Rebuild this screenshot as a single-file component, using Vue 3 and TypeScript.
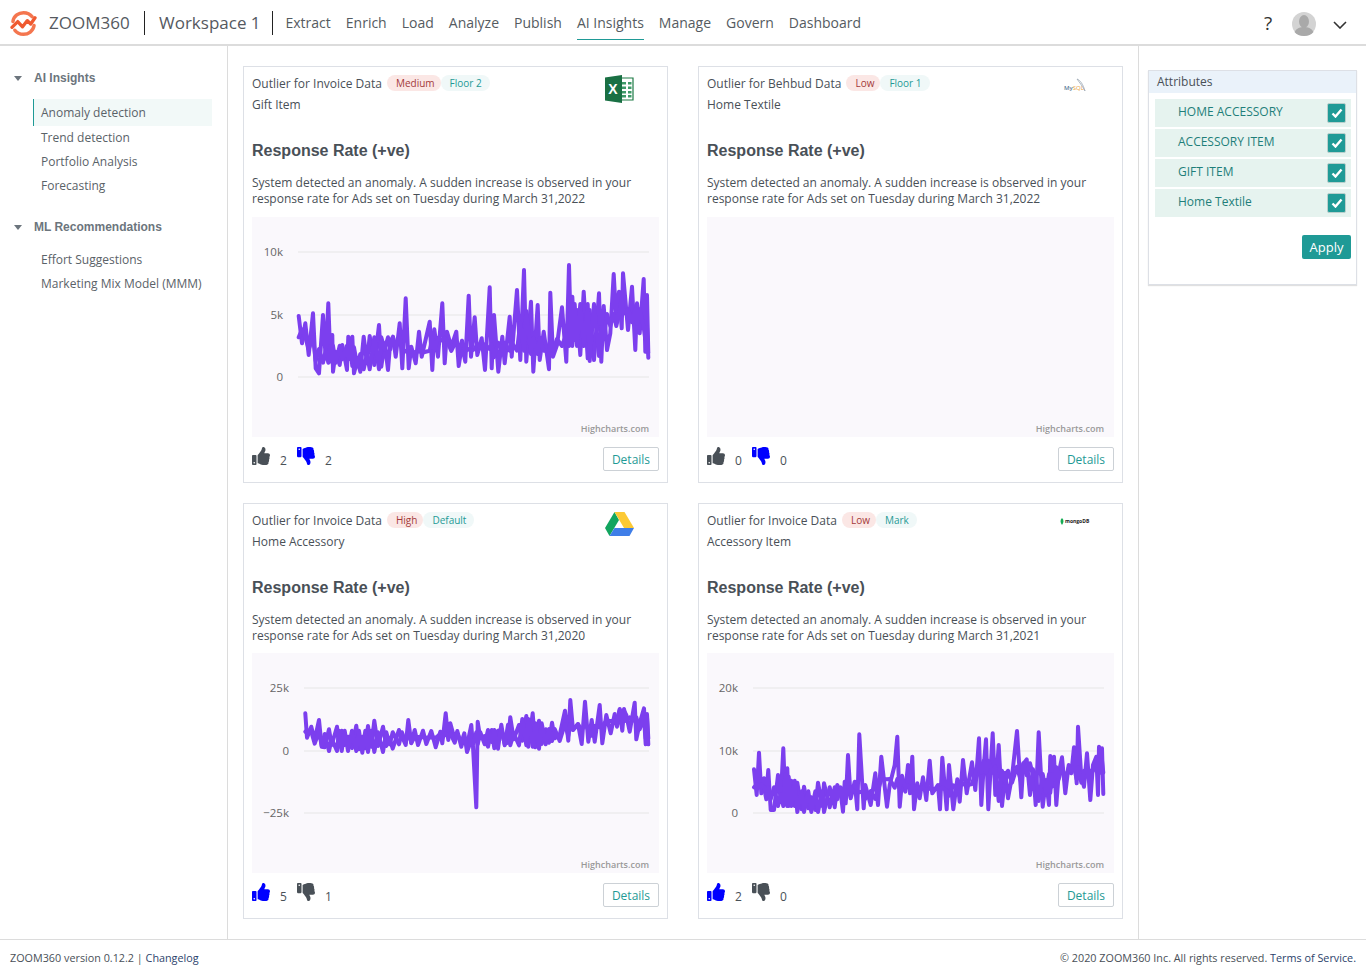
<template>
  <div class="app">
    <header class="topbar">
      <svg class="logo" viewBox="0 0 28 26" aria-hidden="true">
        <path d="M3 11C4 5 9 1.800 14 1.800c4 0 7 1.500 9 4.200" class="logo-arc" />
        <path d="M25 15c-1 6-6 9.200-11 9.200-4 0-7-1.500-9-4.200" class="logo-arc" />
        <path d="M2 17 8 11l5 5.500 5-6.500 3.500 3.500 4.500-6.500" class="logo-wave" />
      </svg>
      <span class="brand">ZOOM360</span>
      <span class="workspace">Workspace 1</span>
      <nav class="nav">
        <a v-for="item in navItems" :key="item" :class="{ active: item === 'AI Insights' }">{{ item }}</a>
      </nav>
      <div class="top-actions">
        <span class="help">?</span>
        <svg class="avatar" viewBox="0 0 24 24" aria-hidden="true">
          <circle cx="12" cy="12" r="12" fill="#d3d3d3" />
          <ellipse cx="12" cy="9.500" rx="5" ry="6.500" fill="#a9a9a9" />
          <path d="M2.500 20c2-4 6-5 9.500-5s7.500 1 9.500 5c-2 2.600-5.500 4-9.500 4s-7.500-1.400-9.500-4z" fill="#a9a9a9" />
        </svg>
        <svg class="chevron" viewBox="0 0 14 8" aria-hidden="true">
          <path d="M1 1l6 6 6-6" fill="none" stroke="#333" stroke-width="1.600" />
        </svg>
      </div>
    </header>

    <div class="body">
      <aside class="sidebar">
        <section v-for="group in menu" :key="group.title" class="menu-group">
          <h4 class="menu-title"><i class="caret"></i>{{ group.title }}</h4>
          <ul>
            <li v-for="link in group.links" :key="link" :class="{ current: link === 'Anomaly detection' }">{{ link }}</li>
          </ul>
        </section>
      </aside>

      <main class="content">
        <article v-for="card in cards" :key="card.heading + card.sub" class="card">
          <div class="card-head">
            <span class="card-title">{{ card.heading }}</span>
            <span class="pill pill-level">{{ card.level }}</span>
            <span class="pill pill-floor">{{ card.floor }}</span>
            <div class="source">
              <svg v-if="card.source === 'excel'" class="src-excel" viewBox="0 0 29 28" aria-hidden="true">
                <path d="M15 3h13v22H15z" fill="#fff" stroke="#1d7a45" stroke-width="1.200" />
                <path d="M17 7h4v2.500h-4zM23 7h3.500v2.500H23zM17 11.500h4V14h-4zM23 11.500h3.500V14H23zM17 16h4v2.500h-4zM23 16h3.500v2.500H23zM17 20h4v2.500h-4zM23 20h3.500v2.500H23z" fill="#3f9a68" />
                <path d="M0 2.500 17 0v28L0 25.500z" fill="#1a7044" />
                <text x="8" y="19" class="excel-x">X</text>
              </svg>
              <svg v-else-if="card.source === 'drive'" class="src-drive" viewBox="0 0 29 24" aria-hidden="true">
                <path d="M9.500 0 0 16l4.500 8L14 8z" fill="#12a55f" />
                <path d="M9.500 0h10L29 16H19z" fill="#fcc934" />
                <path d="M9.500 16H29l-4.500 8h-20z" fill="#3f7ee8" />
              </svg>
              <div v-else-if="card.source === 'mysql'" class="src-mysql">
                <svg viewBox="0 0 10 14" aria-hidden="true">
                  <path d="M1 1c3 1 6 5 8 12C7 9 4 5 1 1z" fill="none" stroke="#9aa7b4" stroke-width=".8" />
                </svg>
                <span><b>My</b><em>SQL</em></span>
              </div>
              <div v-else class="src-mongo">
                <svg viewBox="0 0 4 7" aria-hidden="true"><path d="M2 0c2 2 2 4 0 7-2-3-2-5 0-7z" fill="#13aa52" /></svg>
                <span>mongoDB</span>
              </div>
            </div>
          </div>
          <div class="card-sub">{{ card.sub }}</div>
          <h3 class="card-heading">Response Rate (+ve)</h3>
          <p class="card-desc">
            System detected an anomaly. A sudden increase is observed in your<br />
            response rate for Ads set on Tuesday during March 31,{{ card.year }}
          </p>

          <svg class="chart" viewBox="0 0 407 220" role="img">
            <template v-if="card.axis">
              <g v-for="(label, i) in card.axis.labels" :key="label">
                <line :x1="card.axis.left" x2="397" :y1="gridY[i]" :y2="gridY[i]" class="grid" />
                <text :x="card.axis.left - 15" :y="gridY[i] + 4" class="tick">{{ label }}</text>
              </g>
              <polyline :points="toPoints(card.extrema, card.offsetY)" class="series" />
              <polyline :points="bandPoints(card.extrema, card.offsetY)" class="series" />
            </template>
            <text x="397" y="214.500" class="credit">Highcharts.com</text>
          </svg>

          <div class="card-foot">
            <svg class="thumb" :class="{ on: card.upOn }" viewBox="0 0 512 512" aria-hidden="true"><path :d="thumbPath" /></svg>
            <span class="count">{{ card.up }}</span>
            <svg class="thumb thumb-down" :class="{ on: card.downOn }" viewBox="0 0 512 512" aria-hidden="true">
              <path :d="thumbPath" transform="matrix(1 0 0 -1 0 512)" />
            </svg>
            <span class="count">{{ card.down }}</span>
            <button type="button" class="details">Details</button>
          </div>
        </article>
      </main>

      <aside class="rightcol">
        <div class="attr-panel">
          <div class="attr-head">Attributes</div>
          <div class="attr-list">
            <label v-for="attr in attributes" :key="attr" class="attr-row">
              <span>{{ attr }}</span>
              <i class="check">
                <svg viewBox="0 0 12 10" aria-hidden="true"><path d="M1.500 5.500 4.500 8.500 10.500 1.500" fill="none" stroke="#fff" stroke-width="2.400" /></svg>
              </i>
            </label>
          </div>
          <div class="attr-actions">
            <button type="button" class="apply">Apply</button>
          </div>
        </div>
      </aside>
    </div>

    <footer class="footer">
      <span>ZOOM360 version 0.12.2 | <a>Changelog</a></span>
      <span>© 2020 ZOOM360 Inc. All rights reserved. <a>Terms of Service.</a></span>
    </footer>
  </div>
</template>

<script setup lang="ts">
interface Card {
  heading: string
  level: string
  floor: string
  sub: string
  source: 'excel' | 'mysql' | 'drive' | 'mongo'
  year: number
  up: number
  down: number
  upOn: boolean
  downOn: boolean
  offsetY: number
  axis: { labels: string[]; left: number } | null
  extrema: number[]
}

const navItems = ['Extract', 'Enrich', 'Load', 'Analyze', 'Publish', 'AI Insights', 'Manage', 'Govern', 'Dashboard']

const menu = [
  { title: 'AI Insights', links: ['Anomaly detection', 'Trend detection', 'Portfolio Analysis', 'Forecasting'] },
  { title: 'ML Recommendations', links: ['Effort Suggestions', 'Marketing Mix Model (MMM)'] }
]

const attributes = ['HOME ACCESSORY', 'ACCESSORY ITEM', 'GIFT ITEM', 'Home Textile']

const gridY = [35, 98, 160]

const thumbPath =
  'M104 224H24c-13.255 0-24 10.745-24 24v240c0 13.255 10.745 24 24 24h80c13.255 0 24-10.745 24-24V248c0-13.255-10.745-24-24-24zM64 472c-13.255 0-24-10.745-24-24s10.745-24 24-24 24 10.745 24 24-10.745 24-24 24zM384 81.452c0 42.416-25.97 66.208-33.277 94.548h101.723c33.397 0 59.397 27.746 59.553 58.098.084 17.938-7.546 37.249-19.439 49.197l-.11.11c9.836 23.337 8.237 56.037-9.308 79.469 8.681 25.895-.069 57.704-16.382 74.757 4.298 17.598 2.244 32.575-6.148 44.632C440.202 511.587 389.616 512 346.839 512l-2.845-.001c-48.287-.017-87.806-17.598-119.56-31.725-15.957-7.099-36.821-15.887-52.651-16.178-6.54-.12-11.783-5.457-11.783-11.998v-213.77c0-3.2 1.282-6.271 3.558-8.521 39.614-39.144 56.648-80.587 89.117-113.111 14.804-14.832 20.188-37.236 25.393-58.902C282.515 39.293 291.817 0 312 0c24 0 72 8 72 81.452z'

// local highs and lows of each line, read off at 3x (x, y, x, y ...)
const series1 = [167,258,177,340,187,280,197,375,210,250,218,415,228,430,240,255,248,385,256,220,262,380,268,315,270,425,278,365,290,405,298,345,312,420,316,320,322,370,328,320,333,430,343,390,352,425,362,320,372,400,380,318,394,405,408,285,415,410,425,340,435,420,442,335,450,320,458,380,470,280,478,415,488,205,497,415,505,350,518,400,528,305,536,380,560,275,568,420,574,298,585,380,598,220,605,400,612,305,625,350,640,305,647,408,657,345,667,395,677,197,684,380,695,262,703,375,716,325,726,420,740,172,746,415,753,255,766,425,778,320,785,400,800,260,806,380,822,180,832,390,843,120,850,395,864,215,871,425,884,225,890,390,902,305,918,418,922,188,930,380,942,345,957,232,970,395,978,105,984,330,988,200,995,330,1002,240,1012,375,1022,185,1034,385,1040,240,1053,390,1068,190,1075,395,1082,228,1092,360,1102,310,1112,132,1120,270,1128,185,1136,295,1140,130,1155,300,1167,170,1177,360,1182,220,1190,310,1202,147,1207,365,1212,195,1216,368]

const series3 = [187,130,192,203,205,170,215,210,228,150,236,230,245,232,258,178,266,225,282,170,288,226,296,182,305,225,315,200,327,234,340,167,348,238,358,200,367,235,375,168,385,230,394,152,405,228,420,170,430,228,440,205,449,236,468,180,477,200,488,225,496,150,505,220,515,180,525,225,540,182,550,222,565,183,578,232,592,185,598,220,608,130,616,210,622,160,635,208,643,183,655,230,664,200,672,228,685,165,690,230,700,412,704,155,712,205,725,198,735,230,746,180,754,235,765,182,775,180,785,222,795,218,802,142,812,208,828,165,838,212,850,138,856,230,869,130,877,232,888,152,896,222,908,178,918,218,927,158,935,205,950,195,966,122,976,212,982,90,990,180,1005,162,1016,222,1026,95,1036,215,1046,150,1055,215,1070,105,1078,220,1090,135,1103,190,1115,132,1122,170,1130,120,1138,182,1143,122,1150,135,1160,185,1175,98,1180,208,1190,160,1203,115,1208,205,1212,132,1216,205]

const series4 = [168,298,176,375,183,248,190,370,198,325,205,370,211,300,218,420,228,420,240,315,248,390,256,235,262,390,268,295,272,408,280,332,290,408,298,338,311,418,318,350,331,415,340,382,352,420,360,338,373,408,378,340,395,412,404,370,410,412,418,345,428,370,435,425,440,335,443,400,450,255,458,385,470,335,478,418,484,193,497,415,502,345,518,405,532,310,540,405,550,260,567,410,575,345,590,285,598,200,605,410,612,335,622,365,630,285,636,370,643,260,648,418,658,340,665,385,675,322,685,390,695,272,703,370,720,345,726,418,733,263,746,418,753,285,766,418,778,328,785,395,795,270,806,370,822,277,832,360,843,205,850,405,857,290,864,208,871,418,884,190,892,375,902,225,912,408,922,308,930,385,942,320,957,183,970,382,976,282,986,268,996,375,1005,298,1013,405,1022,187,1034,410,1044,330,1053,405,1057,258,1062,350,1068,260,1075,405,1082,310,1092,262,1102,370,1112,285,1120,310,1128,232,1136,340,1140,170,1150,320,1158,350,1167,250,1177,390,1185,285,1195,260,1200,375,1203,230,1208,290,1212,235,1216,372]

const cards: Card[] = [
  { heading: 'Outlier for Invoice Data', level: 'Medium', floor: 'Floor 2', sub: 'Gift Item', source: 'excel', year: 2022, up: 2, down: 2, upOn: false, downOn: true, offsetY: 13, axis: { labels: ['10k', '5k', '0'], left: 46 }, extrema: series1 },
  { heading: 'Outlier for Behbud Data', level: 'Low', floor: 'Floor 1', sub: 'Home Textile', source: 'mysql', year: 2022, up: 0, down: 0, upOn: false, downOn: true, offsetY: 13, axis: null, extrema: [] },
  { heading: 'Outlier for Invoice Data', level: 'High', floor: 'Default', sub: 'Home Accessory', source: 'drive', year: 2020, up: 5, down: 1, upOn: true, downOn: false, offsetY: 17, axis: { labels: ['25k', '0', '−25k'], left: 52 }, extrema: series3 },
  { heading: 'Outlier for Invoice Data', level: 'Low', floor: 'Mark', sub: 'Accessory Item', source: 'mongo', year: 2021, up: 2, down: 0, upOn: true, downOn: false, offsetY: 17, axis: { labels: ['20k', '10k', '0'], left: 46 }, extrema: series4 }
]

function toPoints(values: number[], offsetY: number): string {
  const out: string[] = []
  for (let i = 0; i < values.length; i += 2) {
    out.push(`${(values[i] / 3 - 9).toFixed(1)},${(values[i + 1] / 3 + offsetY).toFixed(1)}`)
  }
  return out.join(' ')
}

// the real line is much denser than the highs and lows: wiggle round its running middle to fill the body
function bandPoints(values: number[], offsetY: number): string {
  const out: string[] = []
  const count = values.length / 2
  for (let i = 0; i < count; i++) {
    const around: number[] = []
    for (let j = Math.max(0, i - 3); j <= Math.min(count - 1, i + 3); j++) around.push(values[j * 2 + 1])
    around.sort((a, b) => a - b)
    const middle = around[Math.floor(around.length / 2)]
    const wiggle = i % 2 ? 6 : -6
    out.push(`${(values[i * 2] / 3 - 9).toFixed(1)},${(middle / 3 + offsetY + wiggle).toFixed(1)}`)
  }
  return out.join(' ')
}
</script>

<style>
html, body { margin: 0; background: #fff; }
</style>

<style scoped>
.app { display: flex; flex-direction: column; height: 975px; font-family: "Open Sans", sans-serif; color: #495057; overflow: hidden; }

.topbar { flex: none; height: 46px; box-sizing: border-box; display: flex; align-items: center; border-bottom: 2px solid #dcdcdc; padding: 2px 0 0 10px; }
.logo { width: 27px; height: 25px; flex: none; }
.logo-arc { fill: none; stroke: #f4764f; stroke-width: 3.600; stroke-linecap: round; }
.logo-wave { fill: none; stroke: #ef5a30; stroke-width: 3.400; stroke-linejoin: round; stroke-linecap: round; }
.brand { font-size: 17px; margin-left: 12px; color: #55595f; width: 95px; border-right: 1px solid #222; line-height: 24px; }
.workspace { font-size: 17px; color: #55595f; padding-left: 14px; width: 113px; border-right: 1px solid #222; line-height: 24px; }
.nav { display: flex; gap: 15px; padding-left: 12.500px; align-self: flex-start; margin-top: -2px; }
.nav a { font-size: 14px; line-height: 46px; color: #555b61; height: 40px; box-sizing: border-box; }
.nav a.active { border-bottom: 1px solid #1f9a96; }
.top-actions { margin-left: auto; display: flex; align-items: center; padding-right: 19px; }
.help { font-size: 19px; color: #333; width: 28px; }
.avatar { width: 24px; height: 24px; margin: 2px 17px 0 0; }
.chevron { width: 14px; height: 8px; margin-top: 3px; }

.body { flex: 1; min-height: 0; display: flex; }
.sidebar { flex: none; width: 228px; box-sizing: border-box; border-right: 1px solid #dcdcdc; padding: 23px 15px 0 14px; }
.menu-group { margin-bottom: 20px; }
.menu-title { display: flex; align-items: center; margin: 0 0 12px; font: bold 12px/18px "Liberation Sans", Arial, sans-serif; color: #6c757d; }
.caret { width: 0; height: 0; border-left: 4.500px solid transparent; border-right: 4.500px solid transparent; border-top: 5px solid #6c757d; margin-right: 12px; }
.menu-group ul { list-style: none; margin: 0; padding: 0 0 0 19px; }
.menu-group li { font-size: 12px; line-height: 24px; padding-left: 8px; color: #5a6268; }
.menu-group li.current { background: #f2f9f8; border-left: 1px solid #1f9a96; padding: 1px 0 0 7px; line-height: 26px; }

.content { flex: none; width: 911px; box-sizing: border-box; border-right: 1px solid #dcdcdc; padding: 20px 15px 0; display: grid; grid-template-columns: 425px 425px; grid-template-rows: 417px 416px; column-gap: 30px; row-gap: 20px; align-content: start; }
.card { box-sizing: border-box; border: 1px solid #dde0e6; padding: 8px; background: #fff; }
.card-head { display: flex; align-items: center; height: 16px; position: relative; }
.card-title { font-size: 12px; color: #495057; margin-right: 5px; white-space: nowrap; }
.pill { font-size: 10px; line-height: 16px; height: 16px; white-space: nowrap; }
.pill-level { background: #fbe7e5; color: #a33a3a; padding: 0 6px 0 9px; border-radius: 8px; }
.pill-floor { background: #f0f8f8; color: #1f9a96; padding: 0 8px 0 9px; border-radius: 8px; }
.source { position: absolute; left: 353px; top: 0; }
.src-excel { display: block; width: 29px; height: 28px; }
.excel-x { font: bold 14px "Liberation Sans", Arial, sans-serif; fill: #fff; text-anchor: middle; }
.src-drive { display: block; width: 29px; height: 24px; }
.src-mysql { position: relative; left: 4px; top: 3px; width: 22px; height: 15px; }
.src-mysql svg { position: absolute; left: 12px; top: 0; width: 10px; height: 14px; }
.src-mysql span { position: absolute; left: 0; top: 6px; font: 6px/8px "Open Sans", sans-serif; color: #5b7c9a; white-space: nowrap; }
.src-mysql b { font-weight: 600; }
.src-mysql em { font-style: normal; color: #e8a33d; }
.src-mongo { display: flex; align-items: center; gap: 1px; margin: 6px 0 0; }
.src-mongo svg { width: 4px; height: 7px; }
.src-mongo span { font: 700 5px/7px "Open Sans", sans-serif; color: #222; }
.card-sub { font-size: 12px; line-height: 16px; margin-top: 6px; color: #495057; }
.card-heading { margin: 28px 0 0; font: bold 16px/20px "Liberation Sans", Arial, sans-serif; color: #495057; }
.card-desc { margin: 14px 0 0; font-size: 12px; line-height: 16px; color: #495057; white-space: nowrap; }
.chart { display: block; width: 407px; height: 220px; margin-top: 10px; background: #faf8fc; }
.card:nth-child(n + 3) .chart { margin-top: 9px; }
.grid { stroke: #e6e6e6; stroke-width: 1; }
.tick { font-size: 11.500px; fill: #666; text-anchor: end; }
.series { fill: none; stroke: #7c3fee; stroke-width: 4; stroke-linejoin: round; stroke-linecap: round; }
.credit { font-size: 9px; font-weight: 600; fill: #999; text-anchor: end; }
.card-foot { display: flex; align-items: flex-start; margin-top: 10px; }
.thumb { width: 18px; height: 18px; fill: #495057; flex: none; }
.thumb.on { fill: #0000ff; }
.count { font-size: 12px; line-height: 16px; margin: 6px 10px 0 10px; color: #495057; }
.details { margin-left: auto; width: 56px; height: 24px; padding: 0; box-sizing: border-box; background: #fff; border: 1px solid #ccd1d6; border-radius: 2px; color: #1f9a96; font: 12px "Open Sans", sans-serif; }

.rightcol { flex: 1; padding: 24px 9px 0; }
.attr-panel { box-sizing: border-box; height: 215px; border: 1px solid #dde0e6; box-shadow: 0 1px 1px rgba(0,0,0,.12); padding-bottom: 8px; }
.attr-head { background: #eaf2fa; font-size: 12px; line-height: 22px; padding-left: 8px; color: #495057; }
.attr-list { display: flex; flex-direction: column; gap: 2px; padding: 6px 5px 0 6px; }
.attr-row { display: flex; align-items: center; justify-content: space-between; height: 28px; background: #e6f3ef; padding: 0 5px 0 23px; font-size: 12px; color: #1f7f7a; }
.attr-row span { padding-bottom: 3px; }
.check { flex: none; width: 19px; height: 20px; box-sizing: border-box; background: #1f9a96; border: 1px solid #b9cfcc; border-radius: 2px; display: flex; align-items: center; justify-content: center; }
.check svg { width: 12px; height: 10px; }
.attr-actions { display: flex; justify-content: flex-end; padding: 18px 5px 0 0; }
.apply { width: 49px; height: 24px; padding: 0; border: 0; border-radius: 2px; background: #1f9a96; color: #fff; font: 13px "Open Sans", sans-serif; }

.footer { flex: none; height: 36px; box-sizing: border-box; border-top: 1px solid #dcdcdc; display: flex; justify-content: space-between; align-items: center; padding: 0 10px 1px; font-size: 10.800px; color: #495057; }
.footer a { color: #2b3f6b; }
</style>
